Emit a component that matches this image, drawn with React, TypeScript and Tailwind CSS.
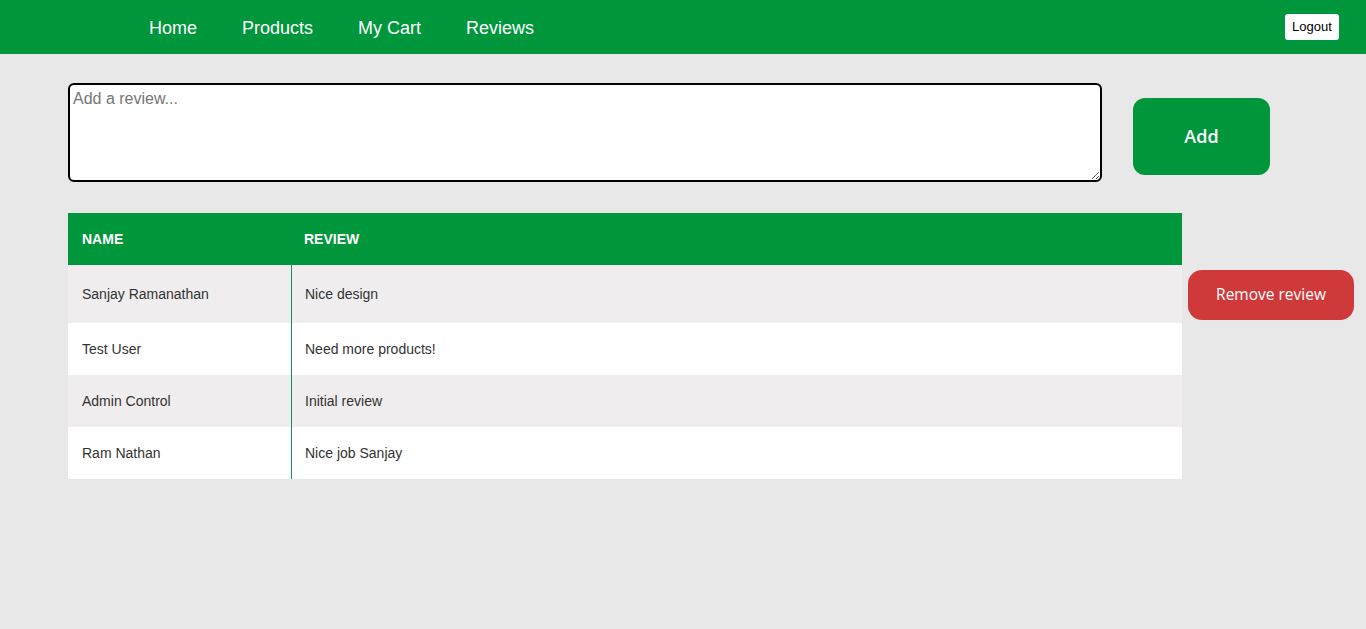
const reviews = [
  { name: "Sanjay Ramanathan", text: "Nice design", mine: true },
  { name: "Test User", text: "Need more products!" },
  { name: "Admin Control", text: "Initial review" },
  { name: "Ram Nathan", text: "Nice job Sanjay" },
];

export default function App() {
  return (
    <div className="min-h-[629px] bg-[#e8e8e8] font-['Liberation_Sans',Arial,sans-serif]">
      {/* Navbar */}
      <nav className="h-[54px] bg-[#00963c] flex items-center">
        <div className="ml-[149px] mt-[2px] flex gap-[45px] text-[18px] text-white">
          <a>Home</a>
          <a>Products</a>
          <a>My Cart</a>
          <a>Reviews</a>
        </div>
        <button className="ml-auto mr-[27px] h-[26px] w-[54px] rounded-[3px] bg-white text-[13px] text-black">
          Logout
        </button>
      </nav>

      <div className="pl-[68px]">
        {/* Add review */}
        <div className="flex items-start pt-[29px]">
          <textarea
            placeholder="Add a review..."
            className="w-[1034px] h-[99px] bg-white border-2 border-black rounded-[6px] px-[3px] py-[2px] text-[16px] placeholder:text-[#757575] outline-none"
          />
          <button className="ml-[31px] mt-[15px] w-[137px] h-[77px] rounded-[12px] bg-[#00963c] text-white text-[18px] font-['Open_Sans',sans-serif] font-semibold">
            Add
          </button>
        </div>

        {/* Reviews table */}
        <div className="mt-[31px]">
          <div className="w-[1114px] h-[52px] bg-[#00963c] flex items-center text-white text-[14px] font-bold">
            <div className="w-[223px] pl-[14px]">NAME</div>
            <div className="pl-[13px]">REVIEW</div>
          </div>
          {reviews.map((r, i) => (
            <div key={r.name} className="flex items-center">
              <div
                className={`w-[1114px] flex text-[14px] text-[#333] ${i % 2 === 0 ? "bg-[#efeded]" : "bg-white"} ${r.mine ? "h-[58px]" : "h-[52px]"}`}
              >
                <div className="w-[223px] pl-[14px] flex items-center">{r.name}</div>
                <div className="w-px bg-[#12915a]" />
                <div className="pl-[13px] flex items-center">{r.text}</div>
              </div>
              {r.mine && (
                <button className="ml-[6px] mt-[2px] w-[166px] h-[50px] rounded-[14px] bg-[#d0393a] text-white text-[15.5px] font-['Open_Sans',sans-serif]">
                  Remove review
                </button>
              )}
            </div>
          ))}
        </div>
      </div>
    </div>
  );
}
